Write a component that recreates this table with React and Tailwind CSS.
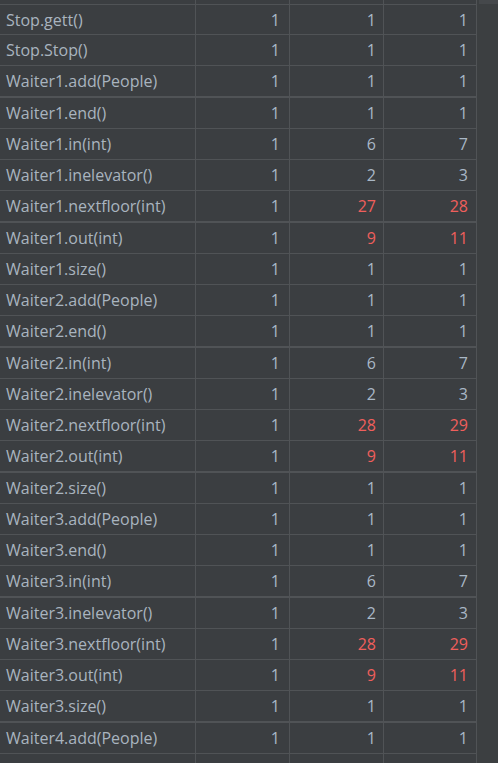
import React from "react";

const rows = [
  ["Stop.gett()", "1", "1", "1"],
  ["Stop.Stop()", "1", "1", "1"],
  ["Waiter1.add(People)", "1", "1", "1"],
  ["Waiter1.end()", "1", "1", "1"],
  ["Waiter1.in(int)", "1", "6", "7"],
  ["Waiter1.inelevator()", "1", "2", "3"],
  ["Waiter1.nextfloor(int)", "1", "27", "28", true],
  ["Waiter1.out(int)", "1", "9", "11", true],
  ["Waiter1.size()", "1", "1", "1"],
  ["Waiter2.add(People)", "1", "1", "1"],
  ["Waiter2.end()", "1", "1", "1"],
  ["Waiter2.in(int)", "1", "6", "7"],
  ["Waiter2.inelevator()", "1", "2", "3"],
  ["Waiter2.nextfloor(int)", "1", "28", "29", true],
  ["Waiter2.out(int)", "1", "9", "11", true],
  ["Waiter2.size()", "1", "1", "1"],
  ["Waiter3.add(People)", "1", "1", "1"],
  ["Waiter3.end()", "1", "1", "1"],
  ["Waiter3.in(int)", "1", "6", "7"],
  ["Waiter3.inelevator()", "1", "2", "3"],
  ["Waiter3.nextfloor(int)", "1", "28", "29", true],
  ["Waiter3.out(int)", "1", "9", "11", true],
  ["Waiter3.size()", "1", "1", "1"],
  ["Waiter4.add(People)", "1", "1", "1"],
  ["Waiter4.end()", "1", "1", "1"],
];

const Row = ({ row, index }) => {
  const [name, a, b, c, hot] = row;
  // every 4th line is drawn 2px thick in the capture
  const thick = index % 4 === 2;
  const border = thick ? "border-b-2" : "border-b";
  const height = index === 0 ? "h-[30px]" : thick ? "h-[32px]" : "h-[31px]";
  const numColor = hot ? "text-[#ef5f5c]" : "text-[#a9b7c6]";
  return (
    <div className={`flex ${height} ${border} border-[#505356] shrink-0`}>
      <div className="w-[196px] border-r border-[#505356] pl-[6px] flex items-center text-[#a9b4bf] whitespace-nowrap">
        {name}
      </div>
      <div className="w-[94px] border-r border-[#505356] pr-[9px] flex items-center justify-end text-[#a9b7c6]">
        {a}
      </div>
      <div className={`w-[94px] border-r border-[#505356] pr-[7px] flex items-center justify-end ${numColor}`}>
        {b}
      </div>
      <div className={`w-[93px] border-r border-[#505356] pr-[8px] flex items-center justify-end ${numColor}`}>
        {c}
      </div>
    </div>
  );
};

const App = () => {
  return (
    <div
      className="w-[498px] h-[763px] overflow-hidden flex bg-[#3b3e41] text-[16px]"
      style={{ fontFamily: '"Open Sans", "Noto Sans", sans-serif' }}
    >
      <div className="w-[477px] flex flex-col shrink-0">
        <div className="flex h-[5px] border-b border-[#505356] shrink-0">
          <div className="w-[196px] border-r border-[#505356]" />
          <div className="w-[94px] border-r border-[#505356]" />
          <div className="w-[94px] border-r border-[#505356]" />
          <div className="w-[93px] border-r border-[#505356]" />
        </div>
        {rows.map((row, i) => (
          <Row key={row[0]} row={row} index={i} />
        ))}
      </div>
      <div className="flex-1 flex flex-col bg-[#3c3f41]">
        <div className="h-[4px] ml-[2px] bg-[#45484b]" />
      </div>
    </div>
  );
};

export default App;
